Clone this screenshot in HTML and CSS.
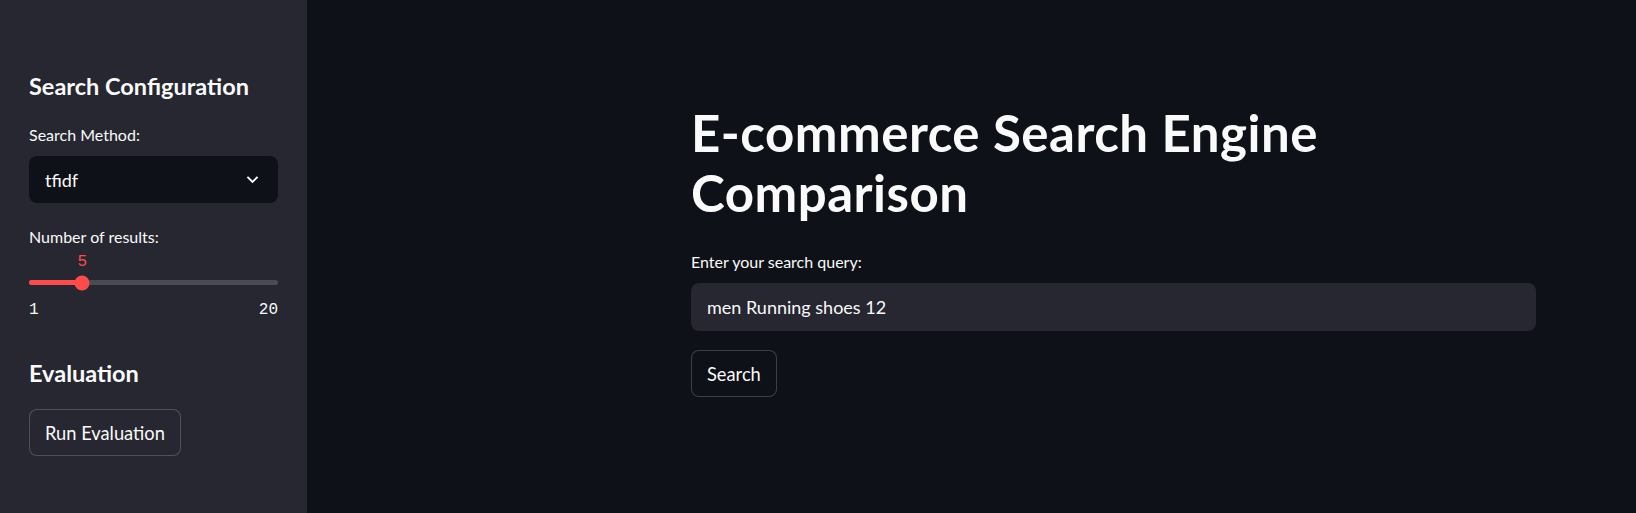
FILE: index.html
```html
<!DOCTYPE html>
<html lang="en">
<head>
<meta charset="utf-8">
<title>E-commerce Search Engine Comparison</title>
<link rel="stylesheet" href="styles.css">
</head>
<body>
<div class="app">
  <aside class="sidebar">
    <h2 class="side-h">Search Configuration</h2>
    <div class="label">Search Method:</div>
    <div class="select">
      <span class="select-val">tfidf</span>
      <svg class="chev" viewBox="0 0 24 24" width="23" height="23"><path d="M7.41 8.59 12 13.17l4.59-4.58L18 10l-6 6-6-6 1.41-1.41z" fill="#fafafa"/></svg>
    </div>
    <div class="label label-slider">Number of results:</div>
    <div class="slider">
      <div class="slider-val-row"><span class="slider-val" style="left: 21.4%">5</span></div>
      <div class="track">
        <div class="track-fill" style="width: 21.4%"></div>
        <div class="thumb" style="left: 21.4%"></div>
      </div>
      <div class="ticks"><span>1</span><span>20</span></div>
    </div>
    <h2 class="side-h eval-h">Evaluation</h2>
    <button class="btn btn-side">Run Evaluation</button>
  </aside>
  <main class="main">
    <div class="block">
      <h1 class="title">E-commerce Search Engine<br>Comparison</h1>
      <div class="label label-main">Enter your search query:</div>
      <div class="input">men Running shoes 12</div>
      <button class="btn btn-main">Search</button>
    </div>
  </main>
</div>
</body>
</html>
```
FILE: styles.css
```css
* { box-sizing: border-box; }
html, body { margin: 0; padding: 0; height: 100%; }
body {
  background: #0e1117;
  color: #fafafa;
  font-family: Lato, "Noto Sans", sans-serif;
  overflow: hidden;
}
.app { display: flex; height: 513px; }
.sidebar {
  width: 307px;
  flex: 0 0 307px;
  background: #262730;
  padding: 68px 29px 0 29px;
  display: flex;
  flex-direction: column;
}
.side-h {
  margin: 0;
  font-size: 23.5px;
  line-height: 36px;
  font-weight: 700;
}
.label {
  font-size: 16px;
  line-height: 22px;
  margin-top: 20px;
}
.select {
  margin-top: 10px;
  height: 47px;
  background: #0e1117;
  border-radius: 8px;
  display: flex;
  align-items: center;
  justify-content: space-between;
  padding: 0 14px 0 16px;
  font-size: 18px;
}
.chev { display: block; }
.label-slider { margin-top: 23px; }
.slider { position: relative; height: 74px; }
.slider-val-row { position: relative; height: 26px; }
.slider-val {
  position: absolute;
  top: 2px;
  transform: translateX(-50%);
  font-family: "Liberation Mono", monospace;
  font-size: 16px;
  line-height: 24px;
  color: #ff4b4b;
}
.track {
  position: relative;
  height: 5px;
  margin-top: 6px;
  border-radius: 3px;
  background: #4a4b55;
}
.track-fill {
  height: 100%;
  background: #ff4b4b;
  border-radius: 3px;
}
.thumb {
  position: absolute;
  top: 50%;
  width: 15px;
  height: 15px;
  border-radius: 50%;
  background: #ff4b4b;
  transform: translate(-50%, -50%);
}
.ticks {
  display: flex;
  justify-content: space-between;
  margin-top: 15px;
  font-family: "Liberation Mono", monospace;
  font-size: 16px;
  line-height: 20px;
}
.eval-h { margin-top: 33px; }
.btn {
  font-family: inherit;
  color: #fafafa;
  font-size: 18.3px;
  border: 1px solid rgba(250, 250, 250, 0.2);
  border-radius: 8px;
  height: 47px;
  padding: 0 15px;
  align-self: flex-start;
  cursor: pointer;
}
.btn-side { margin-top: 18px; background: #262730; }
.main { flex: 1; padding-left: 384px; padding-right: 100px; }
.block { width: 845px; display: flex; flex-direction: column; padding-top: 103px; }
.title {
  margin: 0;
  font-size: 51px;
  line-height: 60px;
  font-weight: 700;
  letter-spacing: 0.5px;
}
.label-main { margin-top: 28px; }
.input {
  margin-top: 10px;
  height: 48px;
  background: #262730;
  border-radius: 8px;
  display: flex;
  align-items: center;
  padding-left: 16px;
  font-size: 18px;
}
.btn-main { margin-top: 19px; background: #0e1117; }
```
